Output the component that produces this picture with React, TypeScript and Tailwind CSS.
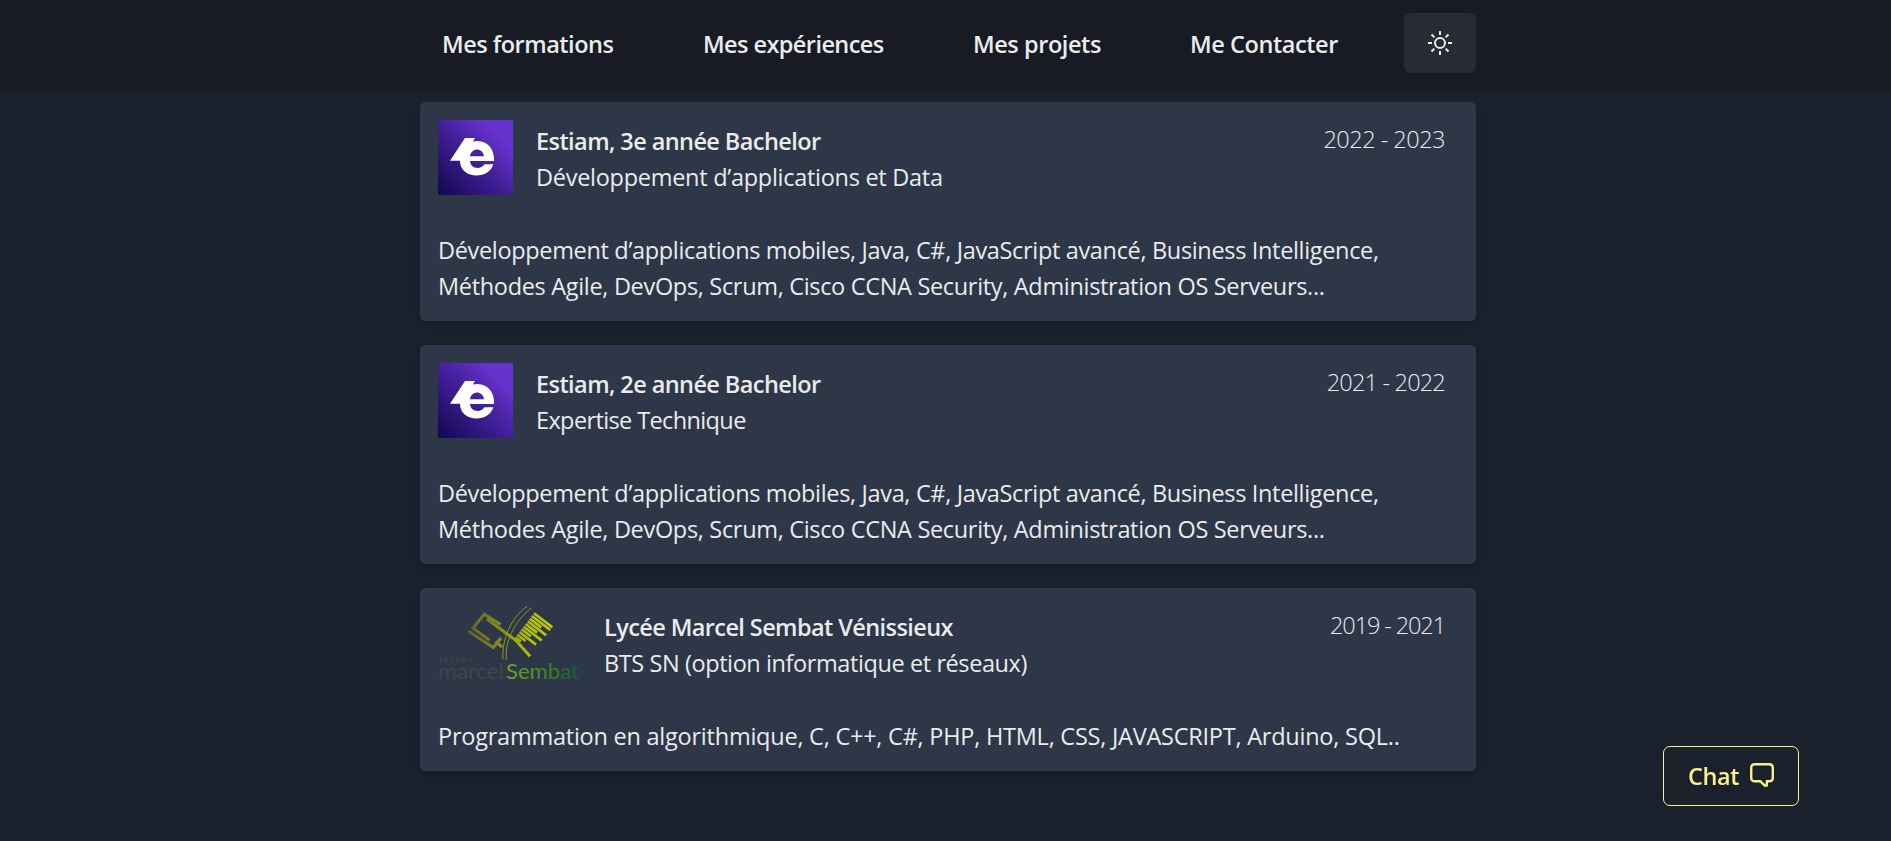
import type { ReactNode } from "react";

function EstiamLogo() {
  return (
    <svg width="75" height="75" viewBox="0 0 75 75" className="shrink-0">
      <defs>
        <linearGradient id="estiam" x1="0" y1="1" x2="1" y2="0">
          <stop offset="0" stopColor="#120750" />
          <stop offset="0.5" stopColor="#43209a" />
          <stop offset="0.8" stopColor="#6732cd" />
          <stop offset="1" stopColor="#6732cd" />
        </linearGradient>
      </defs>
      <rect width="75" height="75" fill="url(#estiam)" />
      <path
        fill="#fff"
        fillRule="evenodd"
        d="M27 18H37L34.8 21.6C47 18.5 57 27.5 56 41H32C32.5 49 43 50 46.5 44.2H55.3C51 60 22 59.5 22 40.7H12ZM32 36.2C33.5 27.3 44.7 27.3 46 36.2Z"
      />
    </svg>
  );
}

const teeth = [
  [96, 7.3, 1], [93.9, 10, 1], [91.9, 12.7, 0.62], [89.8, 15.3, 1], [87.7, 18, 0.62], [85.7, 20.7, 0.98],
  [83.6, 23.3, 0.5], [81.5, 26, 0.9], [79.4, 28.7, 0.45], [77.4, 31.3, 0.3],
];

function SembatLogo() {
  return (
    <svg width="143" height="75" viewBox="0 0 143 75" className="shrink-0 overflow-visible">
      <defs>
        <linearGradient id="screen" gradientUnits="userSpaceOnUse" x1="30" y1="0" x2="114" y2="0">
          <stop offset="0" stopColor="#5f6030" />
          <stop offset="0.35" stopColor="#858722" />
          <stop offset="0.65" stopColor="#acb60c" />
          <stop offset="1" stopColor="#c2d000" />
        </linearGradient>
        <linearGradient id="sembat" gradientUnits="userSpaceOnUse" x1="69" y1="0" x2="142" y2="0">
          <stop offset="0" stopColor="#76a319" />
          <stop offset="0.5" stopColor="#3f8b25" />
          <stop offset="1" stopColor="#125c25" />
        </linearGradient>
      </defs>
      <g fill="none" stroke="url(#screen)" strokeWidth="3">
        <path d="M62.5 18.5L46.3 8.3L35 22L51.5 34.4" />
        <path d="M30.5 25.3L55.3 41.5L63 32" />
        <path d="M57.5 35.5L64 41" />
        <path d="M48.7 12.8L78 34.5L92 50.2" />
        {teeth.map(([x, y, k]) => (
          <path key={x} d={`M${x} ${y}l${18.3 * k} ${14 * k}`} strokeWidth="2.7" />
        ))}
      </g>
      <g fill="none" stroke="#92981b" strokeWidth="1">
        <path d="M89.3 0.3C77 8 64 28 64.8 53" />
        <path d="M93.7 1.7C81 11 66 32 68.4 54" />
      </g>
      <text x="1" y="56" textLength="33" fontSize="9.5" fill="#3f454e" className="font-['Lato',sans-serif]">Lycees</text>
      <text x="0" y="72.7" textLength="66" lengthAdjust="spacingAndGlyphs" fontSize="21.5" fill="#42444a" className="font-['Lato',sans-serif]">marcel</text>
      <text x="68" y="72.7" textLength="73" lengthAdjust="spacingAndGlyphs" fontSize="21.5" fill="url(#sembat)" className="font-['Lato',sans-serif]">Sembat</text>
    </svg>
  );
}

function SunIcon() {
  return (
    <svg width="24" height="24" viewBox="0 0 24 24" fill="none" stroke="#ebebec" strokeWidth="2">
      <circle cx="12" cy="12" r="5" />
      <path d="M12 0v4M12 20v4M0 12h4M20 12h4M3.5 3.5l2.8 2.8M17.7 17.7l2.8 2.8M20.5 3.5l-2.8 2.8M6.3 17.7l-2.8 2.8" />
    </svg>
  );
}

function ChatIcon() {
  return (
    <svg width="24" height="24" viewBox="0 0 24 24" fill="none" stroke="#faf089" strokeWidth="2.4" strokeLinejoin="round">
      <path d="M5 1.2H19Q22.8 1.2 22.8 5V14.5Q22.8 18.3 19 18.3H16.8V22.6H14.8L10.5 18.3H5Q1.2 18.3 1.2 14.5V5Q1.2 1.2 5 1.2Z" />
    </svg>
  );
}

type CardProps = {
  logo: ReactNode;
  title: ReactNode;
  subtitle: ReactNode;
  date: ReactNode;
  children: ReactNode;
};

function Card({ logo, title, subtitle, date, children }: CardProps) {
  return (
    <article className="rounded-[5px] bg-[#2d3748] px-[18px] pt-[18px] pb-[17px] shadow-[0_4px_6px_-1px_rgba(0,0,0,0.1),0_2px_4px_-1px_rgba(0,0,0,0.06)]">
      <div className="flex items-start">
        {logo}
        <div className="ml-[23px] flex-1 pt-[3px] whitespace-nowrap">
          <h2 className="font-semibold">{title}</h2>
          <p>{subtitle}</p>
        </div>
        <div className="mr-[13px] pt-px font-light whitespace-nowrap">{date}</div>
      </div>
      <div className="mt-[37px] whitespace-nowrap">{children}</div>
    </article>
  );
}

export default function App() {
  return (
    <div className="flex h-[841px] flex-col overflow-hidden bg-[#1a202c] font-['Open_Sans','Noto_Sans',sans-serif] text-[23.5px] leading-9 text-[#ebebec]">
      <header className="flex h-[91px] shrink-0 justify-center bg-[#181b23] pl-[5px]">
        <div className="flex h-full w-[1056px] items-start pt-[13px] pl-[22px] font-semibold whitespace-nowrap">
          <nav className="flex flex-1 items-center pt-[13px]">
            <a className="w-[261px] tracking-[-0.5px]">Mes formations</a>
            <a className="w-[270px] tracking-[-0.57px]">Mes expériences</a>
            <a className="w-[217px] tracking-[-0.43px]">Mes projets</a>
            <a className="tracking-[-0.43px]">Me Contacter</a>
          </nav>
          <button className="flex h-[60px] w-[72px] items-center justify-center rounded-[7px] bg-[#292b33]">
            <SunIcon />
          </button>
        </div>
      </header>
      <main className="flex justify-center pt-[11px] pl-[5px]">
        <div className="flex w-[1056px] flex-col gap-6">
          <Card
            logo={<EstiamLogo />}
            title={<span className="tracking-[-0.58px]">Estiam, 3e année Bachelor</span>}
            subtitle={<span className="tracking-[-0.28px]">Développement d’applications et Data</span>}
            date={<span className="tracking-[-0.5px]">2022 - 2023</span>}
          >
            <p className="tracking-[-0.335px]">Développement d’applications mobiles, Java, C#, JavaScript avancé, Business Intelligence,</p>
            <p className="tracking-[-0.32px]">Méthodes Agile, DevOps, Scrum, Cisco CCNA Security, Administration OS Serveurs...</p>
          </Card>
          <Card
            logo={<EstiamLogo />}
            title={<span className="tracking-[-0.58px]">Estiam, 2e année Bachelor</span>}
            subtitle={<span className="tracking-[-0.62px]">Expertise Technique</span>}
            date={<span className="tracking-[-0.8px]">2021 - 2022</span>}
          >
            <p className="tracking-[-0.335px]">Développement d’applications mobiles, Java, C#, JavaScript avancé, Business Intelligence,</p>
            <p className="tracking-[-0.32px]">Méthodes Agile, DevOps, Scrum, Cisco CCNA Security, Administration OS Serveurs...</p>
          </Card>
          <Card
            logo={<SembatLogo />}
            title={<span className="tracking-[-0.59px]">Lycée Marcel Sembat Vénissieux</span>}
            subtitle={<span className="tracking-[-0.41px]">BTS SN (option informatique et réseaux)</span>}
            date={<span className="tracking-[-1.1px]">2019 - 2021</span>}
          >
            <p className="tracking-[-0.235px]">Programmation en algorithmique, C, C++, C#, PHP, HTML, CSS, JAVASCRIPT, Arduino, SQL..</p>
          </Card>
        </div>
      </main>
      <button className="fixed right-[92px] bottom-[35px] flex h-[60px] w-[136px] items-center justify-between rounded-[7px] border border-[#faf089] pr-6 pb-[2px] pl-6 font-semibold text-[#faf089]">
        <span className="pt-[2px] tracking-[-0.4px]">Chat</span>
        <ChatIcon />
      </button>
    </div>
  );
}
